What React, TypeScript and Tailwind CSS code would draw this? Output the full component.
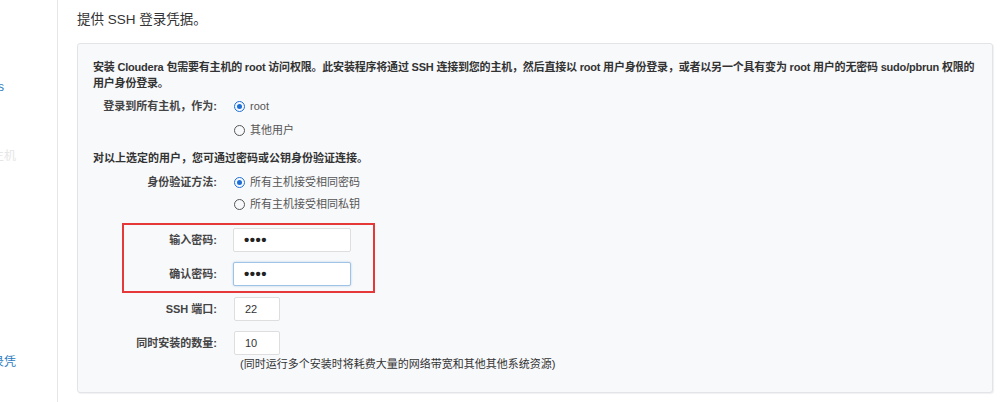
import React from "react";

const FONT = { fontFamily: '"Liberation Sans", "Noto Sans CJK SC", sans-serif' };

function Radio({ checked }: { checked: boolean }) {
  return checked ? (
    <span className="w-[11px] h-[11px] rounded-full border-[1.5px] border-[#1d6fd8] flex items-center justify-center shrink-0">
      <span className="w-[5px] h-[5px] rounded-full bg-[#1d6fd8]" />
    </span>
  ) : (
    <span className="w-[11px] h-[11px] rounded-full border border-[#555] shrink-0" />
  );
}

function Row({ label, children, h = "h-[24px]", mt = "" }: { label?: string; children: React.ReactNode; h?: string; mt?: string }) {
  return (
    <div className={`flex items-center ${h} ${mt}`}>
      <div className="w-[124px] text-right font-bold text-[#444] whitespace-nowrap">{label}</div>
      <div className="ml-[16px] flex items-center">{children}</div>
    </div>
  );
}

function RadioOpt({ checked, text }: { checked: boolean; text: string }) {
  return (
    <div className="flex items-center ml-[1px]">
      <Radio checked={checked} />
      <span className="ml-[5px] text-[#555]">{text}</span>
    </div>
  );
}

export default function App() {
  return (
    <div className="flex w-[1000px] h-[402px] bg-white overflow-hidden text-[11px] leading-[16px] text-[#333]" style={FONT}>
      <div className="w-[58px] shrink-0 border-r border-[#e6e6e6] overflow-hidden text-[12px]">
        <div className="pt-[79px] flex flex-col">
          <div className="w-[4px] flex justify-end whitespace-nowrap text-[#2e7cc0]">Hosts</div>
          <div className="w-[16px] mt-[53px] flex justify-end whitespace-nowrap text-[#e6e6e6]">检查主机</div>
          <div className="w-[16px] mt-[190px] flex justify-end whitespace-nowrap text-[#2e7cc0]">登录凭</div>
        </div>
      </div>
      <div className="pl-[19px] pt-[10px]">
        <div className="text-[13.5px] leading-[20px] text-[#333]">提供 SSH 登录凭据。</div>
        <div className="mt-[13px] w-[916px] border border-[#e2e4e8] rounded-[3px] bg-[#f8f9fb] shadow-[1px_1px_1px_rgba(0,0,0,0.06)] px-[15px] pt-[15px] pb-[20px]">
          <div className="font-bold text-[#333] whitespace-nowrap tracking-[-0.2px]">
            安装 Cloudera 包需要有主机的 root 访问权限。此安装程序将通过 SSH 连接到您的主机，然后直接以 root 用户身份登录，或者以另一个具有变为 root 用户的无密码 sudo/pbrun 权限的
            <br />
            用户身份登录。
          </div>
          <Row label="登录到所有主机，作为:" mt="mt-[3px]">
            <RadioOpt checked text="root" />
          </Row>
          <Row>
            <RadioOpt checked={false} text="其他用户" />
          </Row>
          <div className="mt-[8px] font-bold text-[#333]">对以上选定的用户，您可通过密码或公钥身份验证连接。</div>
          <Row label="身份验证方法:" h="h-[22px]" mt="mt-[5px]">
            <RadioOpt checked text="所有主机接受相同密码" />
          </Row>
          <Row h="h-[22px]">
            <RadioOpt checked={false} text="所有主机接受相同私钥" />
          </Row>
          <div className="relative mt-[13px]">
            <div className="absolute left-[29px] top-[-5px] w-[253px] h-[70px] border-2 border-[#e53838] pointer-events-none" />
            <Row label="输入密码:">
              <div className="w-[118px] h-[24px] bg-white border border-[#dedede] rounded-[2px] flex items-center pl-[10px] text-[15px] font-bold tracking-[0.5px] text-[#222]">••••</div>
            </Row>
            <Row label="确认密码:" mt="mt-[10px]">
              <div className="w-[118px] h-[24px] bg-white border border-[#9fc3e4] rounded-[2px] shadow-[0_0_2px_rgba(80,140,200,0.45)] flex items-center pl-[10px] text-[15px] font-bold tracking-[0.5px] text-[#222]">••••</div>
            </Row>
          </div>
          <Row label="SSH 端口:" mt="mt-[11px]">
            <div className="ml-[1px] w-[46px] h-[24px] bg-white border border-[#dedede] rounded-[2px] flex items-center pl-[10px] text-[#333]">22</div>
          </Row>
          <Row label="同时安装的数量:" mt="mt-[10px]">
            <div className="ml-[1px] w-[46px] h-[24px] bg-white border border-[#dedede] rounded-[2px] flex items-center pl-[10px] text-[#333]">10</div>
          </Row>
          <div className="ml-[147px] mt-[1px] text-[#333] whitespace-nowrap">(同时运行多个安装时将耗费大量的网络带宽和其他其他系统资源)</div>
        </div>
      </div>
    </div>
  );
}
